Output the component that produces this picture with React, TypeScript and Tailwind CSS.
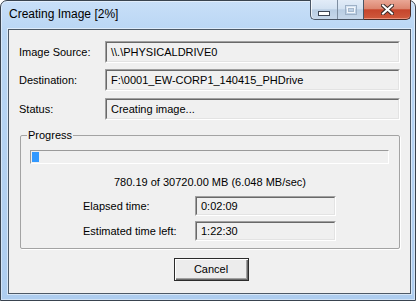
import React from "react";

const FONT = { fontFamily: '"Liberation Sans", Arial, sans-serif' };

function Sunken({ className, children }: { className: string; children?: React.ReactNode }) {
  return (
    <div className={`${className} border border-t-[#a0a0a0] border-l-[#a0a0a0] border-b-white border-r-white`}>
      <div className="h-full w-full border border-t-[#696969] border-l-[#696969] border-b-[#e3e3e3] border-r-[#e3e3e3] flex items-center">
        {children}
      </div>
    </div>
  );
}

function FieldRow({ label, value, className = "" }: { label: string; value: string; className?: string }) {
  return (
    <div className={`flex items-center h-[22px] ${className}`}>
      <div className="w-[86px] leading-[13px]">{label}</div>
      <Sunken className="flex-1 h-[22px]">
        <span className="pl-[4px] leading-[13px] whitespace-nowrap">{value}</span>
      </Sunken>
    </div>
  );
}

function TimeRow({ label, value, className = "" }: { label: string; value: string; className?: string }) {
  return (
    <div className={`flex items-center h-[20px] ml-[62px] ${className}`}>
      <div className="w-[112px] leading-[13px]">{label}</div>
      <Sunken className="w-[141px] h-[20px]">
        <span className="pl-[4px] leading-[13px]">{value}</span>
      </Sunken>
    </div>
  );
}

export default function App() {
  return (
    <div className="w-[419px] h-[302px] bg-white overflow-hidden">
      <div
        className="w-[416px] h-[301px] rounded-t-[7px] border border-[#39434f] flex flex-col bg-[linear-gradient(to_bottom,#c8dff8_0px,#b9d6f4_30px,#aecdef_100%)] shadow-[inset_0_0_0_1px_rgba(255,255,255,0.45)]"
      >
        {/* Title bar */}
        <div className="h-[28px] flex">
          <div className="flex-1 pl-[8px] pt-[6px] text-[12px] leading-[15px] text-black" style={FONT}>
            Creating Image [2%]
          </div>
          <div className="flex -mt-[1px] mr-[4px] h-[20px]">
            <div className="flex rounded-bl-[5px] border border-t-0 border-r-0 border-[#4a5666] overflow-hidden bg-[linear-gradient(to_bottom,#e2ecf8_0%,#d3e2f2_45%,#b9cde3_52%,#c6d7ea_100%)] shadow-[inset_1px_0_0_rgba(255,255,255,0.7)]">
              <div className="w-[27px] border-r border-[#7d8da0] flex items-end justify-center pb-[3px]">
                <svg width="12" height="5" viewBox="0 0 12 5">
                  <rect x="0.5" y="0.5" width="11" height="4" fill="#ffffff" stroke="#3d4654" strokeWidth="1" />
                </svg>
              </div>
              <div className="w-[26px] border-r border-[#4a5666] flex items-center justify-center">
                <svg width="12" height="10" viewBox="0 0 12 10">
                  <rect x="0.5" y="0.5" width="11" height="9" fill="none" stroke="#9db0c6" strokeWidth="1" />
                  <rect x="2.5" y="2.5" width="7" height="5" fill="none" stroke="#f2f6fb" strokeWidth="1" />
                  <rect x="3.5" y="3.5" width="5" height="3" fill="none" stroke="#a7b8cc" strokeWidth="1" />
                </svg>
              </div>
            </div>
            <div className="w-[47px] rounded-br-[5px] border border-t-0 border-l-0 border-[#4a2c26] flex items-center justify-center bg-[linear-gradient(to_bottom,#e9a796_0%,#dc8670_45%,#c6452c_52%,#cf5a3d_100%)] shadow-[inset_0_-1px_0_rgba(255,180,160,0.6)]">
              <svg width="13" height="11" viewBox="0 0 13 11">
                <path d="M2 1.5 L11 9.5 M11 1.5 L2 9.5" stroke="#3a2a28" strokeWidth="4" strokeLinecap="square" />
                <path d="M2 1.5 L11 9.5 M11 1.5 L2 9.5" stroke="#ffffff" strokeWidth="2" strokeLinecap="square" />
              </svg>
            </div>
          </div>
        </div>

        {/* Client area */}
        <div
          className="flex-1 ml-[7px] mr-[4px] mb-[6px] border border-[#4d5966] bg-[#f0f0f0] text-[11px] text-black shadow-[0_0_0_1px_rgba(255,255,255,0.5)]"
          style={FONT}
        >
          <div className="pl-[10px] pr-[10px] pt-[11px] flex flex-col">
            <FieldRow label="Image Source:" value={"\\\\.\\PHYSICALDRIVE0"} />
            <FieldRow label="Destination:" value={"F:\\0001_EW-CORP1_140415_PHDrive"} className="mt-[6px]" />
            <FieldRow label="Status:" value="Creating image..." className="mt-[7px]" />

            <fieldset className="mt-[9px] ml-[1px] border border-[#a3a3a3] rounded-[2px] pb-[7px] shadow-[1px_1px_0_#ffffff]">
              <legend className="ml-[6px] px-[1px] leading-[13px]">Progress</legend>
              <div className="mt-[8px] ml-[9px] mr-[10px] h-[14px] border border-t-[#9a9a9a] border-l-[#9a9a9a] border-b-white border-r-white p-[1px]">
                <div className="h-full bg-[#3399ff]" style={{ width: "2%" }} />
              </div>
              <div className="mt-[12px] text-center leading-[13px]">780.19 of 30720.00 MB (6.048 MB/sec)</div>
              <TimeRow label="Elapsed time:" value="0:02:09" className="mt-[7px]" />
              <TimeRow label="Estimated time left:" value="1:22:30" className="mt-[5px]" />
            </fieldset>

            <div className="mt-[9px] flex justify-center pl-[3px]">
              <button className="w-[75px] h-[23px] border border-[#2b2b2b] bg-[#ececec] shadow-[inset_1px_1px_0_#ffffff,inset_-1px_-1px_0_#696969,inset_-2px_-2px_0_#a0a0a0] leading-[13px] text-[11px] text-black" style={FONT}>
                Cancel
              </button>
            </div>
          </div>
        </div>
      </div>
    </div>
  );
}
